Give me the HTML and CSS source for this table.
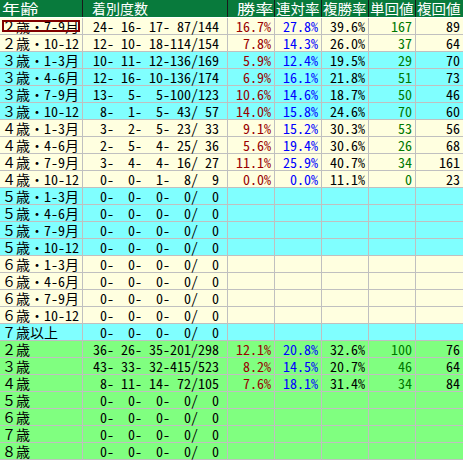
FILE: index.html
```html
<!DOCTYPE html>
<html lang="ja">
<head>
<meta charset="utf-8">
<link rel="stylesheet" href="styles.css">
</head>
<body>
<div class="table">
  <div class="head">
    <div class="h h-age"><span class="wide">年齢</span></div>
    <div class="h h-cnt">着別度数</div>
    <div class="h h-win"><span class="wide">勝率</span></div>
    <div class="h h-3"><span class="w3">連対率</span></div>
    <div class="h h-3"><span class="w3">複勝率</span></div>
    <div class="h h-3"><span class="w3">単回値</span></div>
    <div class="h h-3"><span class="w3">複回値</span></div>
  </div>
  <div class="body">
    <div class="c age cream sel">２歳・<span class="hw">7-9</span>月</div><div class="c cnt cream">24- 16- 17- 87/144</div><div class="c r win cream">16.7%</div><div class="c r ren cream">27.8%</div><div class="c r fk cream">39.6%</div><div class="c r tan cream">167</div><div class="c r fk cream">89</div>
    <div class="c age cream">２歳・<span class="hw">10-12</span></div><div class="c cnt cream">12- 10- 18-114/154</div><div class="c r win cream">7.8%</div><div class="c r ren cream">14.3%</div><div class="c r fk cream">26.0%</div><div class="c r tan cream">37</div><div class="c r fk cream">64</div>
    <div class="c age cyan">３歳・<span class="hw">1-3</span>月</div><div class="c cnt cyan">10- 11- 12-136/169</div><div class="c r win cyan">5.9%</div><div class="c r ren cyan">12.4%</div><div class="c r fk cyan">19.5%</div><div class="c r tan cyan">29</div><div class="c r fk cyan">70</div>
    <div class="c age cyan">３歳・<span class="hw">4-6</span>月</div><div class="c cnt cyan">12- 16- 10-136/174</div><div class="c r win cyan">6.9%</div><div class="c r ren cyan">16.1%</div><div class="c r fk cyan">21.8%</div><div class="c r tan cyan">51</div><div class="c r fk cyan">73</div>
    <div class="c age cyan">３歳・<span class="hw">7-9</span>月</div><div class="c cnt cyan">13-  5-  5-100/123</div><div class="c r win cyan">10.6%</div><div class="c r ren cyan">14.6%</div><div class="c r fk cyan">18.7%</div><div class="c r tan cyan">50</div><div class="c r fk cyan">46</div>
    <div class="c age cyan">３歳・<span class="hw">10-12</span></div><div class="c cnt cyan"> 8-  1-  5- 43/ 57</div><div class="c r win cyan">14.0%</div><div class="c r ren cyan">15.8%</div><div class="c r fk cyan">24.6%</div><div class="c r tan cyan">70</div><div class="c r fk cyan">60</div>
    <div class="c age cream">４歳・<span class="hw">1-3</span>月</div><div class="c cnt cream"> 3-  2-  5- 23/ 33</div><div class="c r win cream">9.1%</div><div class="c r ren cream">15.2%</div><div class="c r fk cream">30.3%</div><div class="c r tan cream">53</div><div class="c r fk cream">56</div>
    <div class="c age cream">４歳・<span class="hw">4-6</span>月</div><div class="c cnt cream"> 2-  5-  4- 25/ 36</div><div class="c r win cream">5.6%</div><div class="c r ren cream">19.4%</div><div class="c r fk cream">30.6%</div><div class="c r tan cream">26</div><div class="c r fk cream">68</div>
    <div class="c age cream">４歳・<span class="hw">7-9</span>月</div><div class="c cnt cream"> 3-  4-  4- 16/ 27</div><div class="c r win cream">11.1%</div><div class="c r ren cream">25.9%</div><div class="c r fk cream">40.7%</div><div class="c r tan cream">34</div><div class="c r fk cream">161</div>
    <div class="c age cream">４歳・<span class="hw">10-12</span></div><div class="c cnt cream"> 0-  0-  1-  8/  9</div><div class="c r win cream">0.0%</div><div class="c r ren cream">0.0%</div><div class="c r fk cream">11.1%</div><div class="c r tan cream">0</div><div class="c r fk cream">23</div>
    <div class="c age cyan">５歳・<span class="hw">1-3</span>月</div><div class="c cnt cyan"> 0-  0-  0-  0/  0</div><div class="c cyan"></div><div class="c cyan"></div><div class="c cyan"></div><div class="c cyan"></div><div class="c cyan"></div>
    <div class="c age cyan">５歳・<span class="hw">4-6</span>月</div><div class="c cnt cyan"> 0-  0-  0-  0/  0</div><div class="c cyan"></div><div class="c cyan"></div><div class="c cyan"></div><div class="c cyan"></div><div class="c cyan"></div>
    <div class="c age cyan">５歳・<span class="hw">7-9</span>月</div><div class="c cnt cyan"> 0-  0-  0-  0/  0</div><div class="c cyan"></div><div class="c cyan"></div><div class="c cyan"></div><div class="c cyan"></div><div class="c cyan"></div>
    <div class="c age cyan">５歳・<span class="hw">10-12</span></div><div class="c cnt cyan"> 0-  0-  0-  0/  0</div><div class="c cyan"></div><div class="c cyan"></div><div class="c cyan"></div><div class="c cyan"></div><div class="c cyan"></div>
    <div class="c age cream">６歳・<span class="hw">1-3</span>月</div><div class="c cnt cream"> 0-  0-  0-  0/  0</div><div class="c cream"></div><div class="c cream"></div><div class="c cream"></div><div class="c cream"></div><div class="c cream"></div>
    <div class="c age cream">６歳・<span class="hw">4-6</span>月</div><div class="c cnt cream"> 0-  0-  0-  0/  0</div><div class="c cream"></div><div class="c cream"></div><div class="c cream"></div><div class="c cream"></div><div class="c cream"></div>
    <div class="c age cream">６歳・<span class="hw">7-9</span>月</div><div class="c cnt cream"> 0-  0-  0-  0/  0</div><div class="c cream"></div><div class="c cream"></div><div class="c cream"></div><div class="c cream"></div><div class="c cream"></div>
    <div class="c age cream">６歳・<span class="hw">10-12</span></div><div class="c cnt cream"> 0-  0-  0-  0/  0</div><div class="c cream"></div><div class="c cream"></div><div class="c cream"></div><div class="c cream"></div><div class="c cream"></div>
    <div class="c age cyan">７歳以上</div><div class="c cnt cyan"> 0-  0-  0-  0/  0</div><div class="c cyan"></div><div class="c cyan"></div><div class="c cyan"></div><div class="c cyan"></div><div class="c cyan"></div>
    <div class="c age green">２歳</div><div class="c cnt green">36- 26- 35-201/298</div><div class="c r win green">12.1%</div><div class="c r ren green">20.8%</div><div class="c r fk green">32.6%</div><div class="c r tan green">100</div><div class="c r fk green">76</div>
    <div class="c age green">３歳</div><div class="c cnt green">43- 33- 32-415/523</div><div class="c r win green">8.2%</div><div class="c r ren green">14.5%</div><div class="c r fk green">20.7%</div><div class="c r tan green">46</div><div class="c r fk green">64</div>
    <div class="c age green">４歳</div><div class="c cnt green"> 8- 11- 14- 72/105</div><div class="c r win green">7.6%</div><div class="c r ren green">18.1%</div><div class="c r fk green">31.4%</div><div class="c r tan green">34</div><div class="c r fk green">84</div>
    <div class="c age green">５歳</div><div class="c cnt green"> 0-  0-  0-  0/  0</div><div class="c green"></div><div class="c green"></div><div class="c green"></div><div class="c green"></div><div class="c green"></div>
    <div class="c age green">６歳</div><div class="c cnt green"> 0-  0-  0-  0/  0</div><div class="c green"></div><div class="c green"></div><div class="c green"></div><div class="c green"></div><div class="c green"></div>
    <div class="c age green">７歳</div><div class="c cnt green"> 0-  0-  0-  0/  0</div><div class="c green"></div><div class="c green"></div><div class="c green"></div><div class="c green"></div><div class="c green"></div>
    <div class="c age green">８歳</div><div class="c cnt green"> 0-  0-  0-  0/  0</div><div class="c green"></div><div class="c green"></div><div class="c green"></div><div class="c green"></div><div class="c green"></div>
  </div>
</div>
</body>
</html>
```
FILE: styles.css
```css
html, body {
  margin: 0;
  padding: 0;
  background: #ffffff;
}
body {
  font-family: "Noto Sans CJK JP", "Noto Sans", sans-serif;
  font-size: 14px;
  color: #000;
}
.table {
  width: 463px;
  display: flex;
  flex-direction: column;
  gap: 1px;
  background: #ffffff;
}
.head, .body {
  display: grid;
  grid-template-columns: 82px 144px 46px 46px 46px 46px 47px;
  column-gap: 1px;
}
.head {
  background: #1a1a1a;
  grid-template-rows: 17px;
}
.body {
  background: #c0c0c0;
  row-gap: 1px;
  grid-auto-rows: 16px;
  padding-bottom: 1px;
}
.h {
  background: #087a3c;
  color: #ffffff;
  line-height: 17px;
  white-space: nowrap;
}
.wide {
  display: inline-block;
  transform: scaleX(1.3);
  transform-origin: left center;
}
.w3 {
  display: inline-block;
  transform: scaleX(1.04);
  transform-origin: left center;
}
.h-age { padding-left: 2px; }
.h-cnt { padding-left: 9px; }
.h-win { padding-left: 9px; }
.h-3 { padding-left: 1px; }
.c {
  line-height: 16px;
  white-space: pre;
}
.hw, .cnt, .r {
  font-feature-settings: "hwid" 1;
}
.age { padding-left: 2px; }
.cnt { text-align: right; padding-right: 8px; }
.r { text-align: right; padding-right: 3px; }
.win { color: #990000; }
.ren { color: #0000ff; }
.tan { color: #007700; }
.fk { color: #000000; }
.cream { background: #ffffe0; }
.cyan { background: #80ffff; }
.green { background: #80ff80; }
.sel {
  outline: 2px solid #800000;
  outline-offset: -4px;
}
```
